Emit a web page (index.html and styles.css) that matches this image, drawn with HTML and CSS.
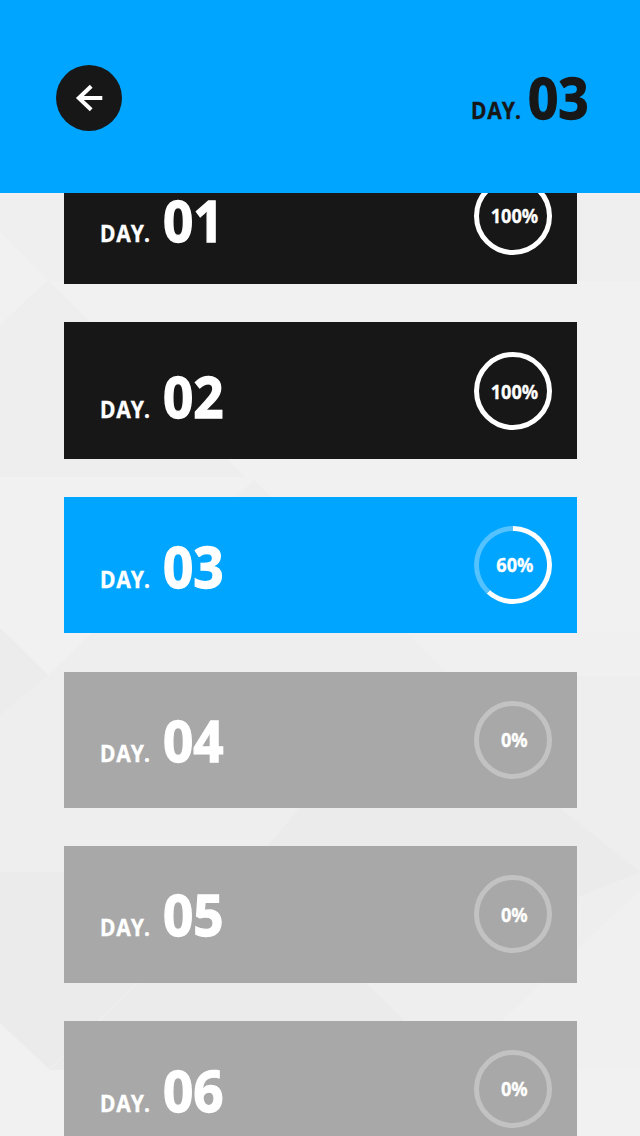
FILE: index.html
```html
<!DOCTYPE html>
<html lang="en">
<head>
    <meta charset="UTF-8">
    <meta name="viewport" content="width=device-width, initial-scale=1.0">
    <title>Day 03</title>
    <link rel="stylesheet" href="styles.css">
</head>
<body>
    <svg class="backdrop" viewBox="0 0 640 1136" aria-hidden="true">
        <rect width="640" height="1136" fill="#f1f1f1"/>
        <path d="M0 193H640V281H48L0 232Z" fill="#efefef"/>
        <path d="M48 280L245 477H0V325Z" fill="#eeeeee"/>
        <path d="M254 480L450 676H640V872H0V628L48 675Z" fill="#eeeeee"/>
        <path d="M0 628L48 675L0 715Z" fill="#ececec"/>
        <path d="M450 676L406 632H640V676Z" fill="#f0f0f0"/>
        <path d="M300 808H560L640 872V1070H50L0 1023V872H245Z" fill="#ebebeb"/>
        <path d="M365 982L455 1070H640V872Z" fill="#eeeeee"/>
        <path d="M640 890L450 1070H640Z" fill="#f0f0f0"/>
        <path d="M50 1069L140 980" fill="none" stroke="#eeeeee" stroke-width="2"/>
    </svg>

    <header class="header">
        <button class="back" aria-label="Back">
            <svg width="66" height="66" viewBox="0 0 66 66" fill="none" stroke="#fff" stroke-width="4">
                <path d="M46.3 33H23M35.2 21.2L22.8 33L35.2 44.8"/>
            </svg>
        </button>
        <div class="label label-dark"><span class="day">DAY.</span><span class="num">03</span></div>
    </header>

    <main class="days">
        <div class="card done first">
            <div class="label"><span class="day">DAY.</span><span class="num">01</span></div>
            <div class="ring full"><span>100%</span></div>
        </div>
        <div class="card done second">
            <div class="label"><span class="day">DAY.</span><span class="num">02</span></div>
            <div class="ring full"><span>100%</span></div>
        </div>
        <div class="card current">
            <div class="label"><span class="day">DAY.</span><span class="num">03</span></div>
            <div class="ring partial"><span>60%</span></div>
        </div>
        <div class="card todo">
            <div class="label"><span class="day">DAY.</span><span class="num">04</span></div>
            <div class="ring"><span>0%</span></div>
        </div>
        <div class="card todo">
            <div class="label"><span class="day">DAY.</span><span class="num">05</span></div>
            <div class="ring"><span>0%</span></div>
        </div>
        <div class="card last">
            <div class="label"><span class="day">DAY.</span><span class="num">06</span></div>
            <div class="ring"><span>0%</span></div>
        </div>
    </main>
</body>
</html>
```

FILE: styles.css
```css
* {
    box-sizing: border-box;
}
body {
    margin: 0;
    height: 1136px;
    display: flex;
    flex-direction: column;
    overflow: hidden;
    font-family: "Noto Sans", "Open Sans", sans-serif;
    font-weight: 700;
    color: #fff;
}
.backdrop {
    position: absolute;
    top: 0;
    left: 0;
    width: 640px;
    height: 1136px;
    z-index: -1;
}
.header {
    position: relative;
    z-index: 1;
    flex: none;
    height: 193px;
    padding: 65px 48px 0 56px;
    display: flex;
    justify-content: space-between;
    background: #00a5ff;
}
.back {
    width: 66px;
    height: 66px;
    padding: 0;
    border: 0;
    border-radius: 50%;
    background: #171717;
}
.back svg {
    display: block;
}
.label {
    display: flex;
    align-items: baseline;
    height: 60px;
    line-height: 60px;
    white-space: nowrap;
}
.label-dark {
    width: 121px;
    margin-top: 2px;
    color: #171717;
}
.day {
    width: 63px;
    font-size: 24px;
    letter-spacing: 1.4px;
    transform: scaleX(0.88);
    transform-origin: 0 0;
    -webkit-text-stroke: 0.3px;
}
.label-dark .day {
    width: 57px;
}
.num {
    font-size: 57px;
    transform: scaleX(0.93);
    transform-origin: 0 0;
    -webkit-text-stroke: 1.3px;
}
/* the list is scrolled, the first card goes under the header */
.days {
    padding-left: 64px;
}
.card {
    width: 513px;
    height: 136.33px;
    margin-bottom: 38.34px;
    padding: 39px 25px 0 36px;
    display: flex;
    justify-content: space-between;
    background: #a8a8a8;
}
.card.done {
    background: #171717;
}
.card.current {
    background: #00a5ff;
}
.card.first {
    margin-top: -45.33px;
}
.card.last {
    height: 114.9px;
    margin-bottom: 0;
}
.first .label {
    margin-top: 3px;
}
.second .label {
    margin-top: 5px;
}
.todo .label {
    margin-top: -1px;
}
.ring {
    width: 78px;
    height: 78px;
    margin-top: -10px;
    display: flex;
    align-items: center;
    justify-content: center;
    border: 5px solid #c2c2c2;
    border-radius: 50%;
    font-size: 19.5px;
}
.ring span {
    transform: scaleX(0.93);
    padding-left: 3px;
    -webkit-text-stroke: 0.3px;
}
.second .ring {
    margin-top: -9px;
}
.ring.full {
    border-color: #fff;
}
.ring.partial {
    border: 0;
    background:
        radial-gradient(circle, #00a5ff 33.5px, transparent 34.5px),
        conic-gradient(#fff 222deg, #54c2ff 222.5deg);
}
```
